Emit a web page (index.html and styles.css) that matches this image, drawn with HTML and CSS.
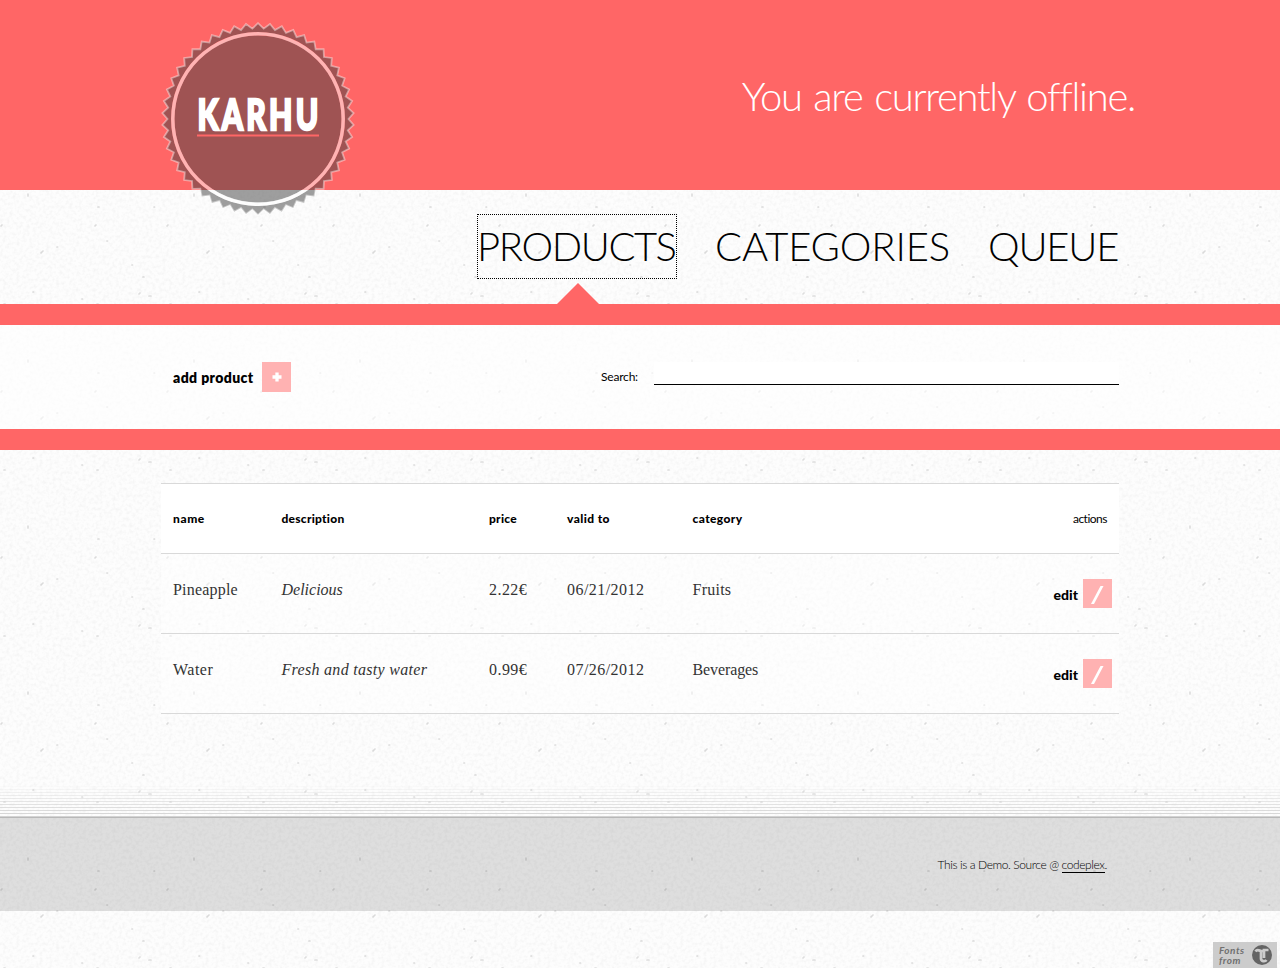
FILE: index.html
```html
<!DOCTYPE html>
<html lang="en">
<head>
<meta charset="utf-8">
<title>Karhu</title>
<link rel="stylesheet" href="styles.css">
</head>
<body>
<header class="banner">
  <div class="wrap banner-row">
    <svg class="logo" width="194" height="194" viewBox="-97 -97 194 194">
      <path id="seal" class="seal" fill-rule="evenodd"/>
      <circle class="seal" r="83.5"/>
      <circle class="ring" r="85.2"/>
      <path id="edge" class="edge"/>
      <text class="logo-text" x="-60.500" y="10.500" textLength="124" lengthAdjust="spacingAndGlyphs">KARHU</text>
      <path class="logo-line" d="M-61 16.500H61"/>
    </svg>
    <p class="status">You are currently offline.</p>
  </div>
</header>
<nav class="nav">
  <div class="wrap nav-row">
    <a class="tab tab-products">PRODUCTS</a>
    <a class="tab tab-categories">CATEGORIES</a>
    <a class="tab tab-queue">QUEUE</a>
  </div>
</nav>
<section class="tools">
  <div class="wrap tools-row">
    <a class="add"><span class="add-label">add product</span><span class="btn"><svg width="29" height="30" viewBox="0 0 29 30"><path d="M15 10.500v9M10.500 15h9" stroke="#fff" stroke-width="3.300"/></svg></span></a>
    <label class="search"><span>Search:</span><input type="text"></label>
  </div>
</section>
<main class="wrap list">
  <div class="row head">
    <span class="h-name">name</span><span class="h-desc">description</span><span class="h-price">price</span><span class="h-valid">valid to</span><span class="h-cat">category</span><span class="h-act">actions</span>
  </div>
  <div class="row item">
    <span class="pine">Pineapple</span><em class="deli">Delicious</em><span class="price">2.22€</span><span class="date">06/21/2012</span><span class="fruit">Fruits</span>
    <a class="edit">edit<span class="btn"><svg width="29" height="29" viewBox="0 0 29 29"><path d="M8 25h3L20.500 7h-3z" fill="#fff"/></svg></span></a>
  </div>
  <div class="row item">
    <span class="water">Water</span><em class="fresh">Fresh and tasty water</em><span class="price">0.99€</span><span class="date">07/26/2012</span><span class="bev">Beverages</span>
    <a class="edit">edit<span class="btn"><svg width="29" height="29" viewBox="0 0 29 29"><path d="M8 25h3L20.500 7h-3z" fill="#fff"/></svg></span></a>
  </div>
</main>
<div class="stripes"></div>
<footer class="footer">
  <div class="wrap"><p class="note">This is a Demo. Source @ <a>codeplex</a>.</p></div>
</footer>
<div class="badge">
  <div class="badge-text"><span>Fonts</span><span>from</span></div>
  <svg width="20" height="20" viewBox="0 0 20 20"><circle cx="10" cy="10" r="10" fill="#646464"/><path d="M3.500 6.500C5 4 7 5.500 9 6v7.500c0 3 4 3.500 5.500 1.500M9 6h3M12 13V5h4.500" fill="none" stroke="#ccc" stroke-width="2.700"/></svg>
</div>
<script src="logo.js"></script>
</body>
</html>
```
FILE: logo.js
```js
// Serrated outline of the logo seal
var teeth = 50, pts = [];
for (var i = 0; i < teeth * 2; i++) {
  var a = Math.PI * i / teeth, r = i % 2 ? 90.5 : 95.8;
  pts.push((Math.sin(a) * r).toFixed(2) + ' ' + (-Math.cos(a) * r).toFixed(2));
}
var outline = 'M' + pts.join('L') + 'Z';
document.getElementById('edge').setAttribute('d', outline);
document.getElementById('seal').setAttribute('d', outline + 'M87 0A87 87 0 1 1 -87 0A87 87 0 1 1 87 0Z');
```
FILE: styles.css
```css
* { box-sizing: border-box; }
body {
  margin: 0; min-height: 968px; color: #000;
  font: 12px/18px Lato, sans-serif;
  background: #fdfdfd url("data:image/svg+xml,%3Csvg xmlns='http://www.w3.org/2000/svg' width='166' height='166'%3E%3Cfilter id='n' x='0' y='0' width='1' height='1'%3E%3CfeTurbulence type='fractalNoise' baseFrequency='.3' numOctaves='2' stitchTiles='stitch'/%3E%3CfeColorMatrix values='0 0 0 0 0 0 0 0 0 0 0 0 0 0 0 .075 0 0 0 -.031'/%3E%3C/filter%3E%3Crect width='166' height='166' filter='url(%23n)'/%3E%3Cg stroke='%23000' stroke-opacity='.12' stroke-width='1.7' stroke-linecap='round'%3E%3Cpath d='M139 128l1 -1M149 130h2M4 138h1M143 111h1M132 99h.5M41 87l2 -2M1 60l1 -1M154 41h.5M28 28v2M57 81h.5M33 126h.5M82 133h.5M97 138h1M95 60l1 -1M98 41h1M107 75h.5'/%3E%3C/g%3E%3C/svg%3E");
}
p { margin: 0; }
.wrap { width: 958px; margin: 0 auto; }
.banner { height: 190px; background: #f66; }
.banner-row { display: flex; justify-content: space-between; }
.logo { margin: 22px 0 -30px; flex: none; position: relative; z-index: 1; }
.seal { fill: rgba(63,63,63,.5); }
.ring { fill: none; stroke: rgba(255,255,255,.5); stroke-width: 3.5; }
.edge { fill: none; stroke: rgba(255,255,255,.42); stroke-width: 1.8; }
.logo-text { font: 900 42px Lato, sans-serif; fill: #fff; stroke: #fff; stroke-width: 2.4; letter-spacing: 4.5px; }
.logo-line { stroke: #f66; stroke-width: 2; }
.status { margin: 66px -16px 0 0; font-size: 40px; line-height: 60px; font-weight: 300; color: #fff; letter-spacing: -1.3px; word-spacing: 2px; white-space: nowrap; }
.nav { height: 135px; border-bottom: 21px solid #f66; }
.nav-row { display: flex; justify-content: flex-end; padding-top: 24px; }
.tab { height: 65px; font-size: 40px; line-height: 65px; font-weight: 300; white-space: nowrap; }
.tab-products { width: 200px; margin-right: 39px; border: 1px dotted #000; line-height: 63px; letter-spacing: -1.4px; position: relative; text-indent: -1px; }
.tab-products::after { content: ""; position: absolute; left: 79px; top: 68px; border: solid transparent; border-width: 0 21.5px 21px; border-bottom-color: #f66; }
.tab-categories { width: 234px; margin-right: 39px; letter-spacing: -.15px; text-indent: -1px; }
.tab-queue { width: 130px; letter-spacing: -1.2px; text-indent: -1px; }
.tools { height: 125px; background: rgba(255,255,255,.6); border-bottom: 21px solid #f66; }
.tools-row { display: flex; justify-content: space-between; padding: 37px 0 0 12px; }
.add { display: flex; font-size: 14px; font-weight: 800; line-height: 31px; }
.add-label { width: 89px; letter-spacing: .4px; }
.btn { display: flex; width: 29px; background: #ffb2b2; }
.add .btn { height: 30px; }
.search { display: flex; line-height: 29px; }
.search span { width: 53px; letter-spacing: -.2px; }
.search input { width: 465px; height: 23px; border: 0; border-bottom: 1px solid #000; background: #fff; outline: 0; }
.list { margin-top: 33px; border-top: 1px solid #d9d9d9; }
.row { display: grid; grid-template-columns: 108.500px 207.500px 78px 125.500px 300px 1fr; padding-left: 12px; border-bottom: 1px solid #d9d9d9; white-space: nowrap; }
.head { height: 70px; background: #fff; font-weight: 900; line-height: 70px; }
.h-name { letter-spacing: .6px; }
.h-desc, .h-price { letter-spacing: .25px; }
.h-valid, .h-cat { letter-spacing: .4px; }
.h-act { font-weight: 400; text-align: right; padding-right: 12px; letter-spacing: -.5px; }
.item { height: 80px; padding-top: 24px; background: rgba(255,255,255,.45); color: #333; font: 16px/23px "Liberation Serif", serif; }
.pine { letter-spacing: .2px; }
.water { letter-spacing: .5px; }
.fresh { letter-spacing: .3px; }
.price, .date { letter-spacing: .45px; }
.fruit { letter-spacing: .25px; }
.bev { letter-spacing: -.1px; }
.edit { display: flex; justify-content: flex-end; margin-top: 1px; padding-right: 7px; color: #000; font: 900 14px/32px Lato, sans-serif; }
.edit .btn { height: 29px; margin-left: 5px; }
.stripes { height: 33px; margin-top: 70px; background: repeating-linear-gradient(to bottom, transparent 0 2px, #d2d2d2 2px 3px); -webkit-mask-image: linear-gradient(transparent, #000); mask-image: linear-gradient(transparent, #000); }
.footer { height: 94px; padding-top: 38px; border-top: 1px solid #b8b8b8; background: rgba(0,0,0,.12); }
.note { text-align: right; padding-right: 12px; font-weight: 300; letter-spacing: -.4px; }
.note a { display: inline-block; line-height: 15px; border-bottom: 1px solid #000; }
.badge { position: fixed; right: 3px; bottom: 0; width: 64px; height: 26px; display: flex; gap: 5px; padding: 3px 0 0 6px; background: #ccc; color: #707070; font: italic 700 10px/10px Lato, sans-serif; }
.badge-text { width: 28px; display: flex; flex-direction: column; letter-spacing: .5px; }
.badge-text span { height: 10px; }
```
